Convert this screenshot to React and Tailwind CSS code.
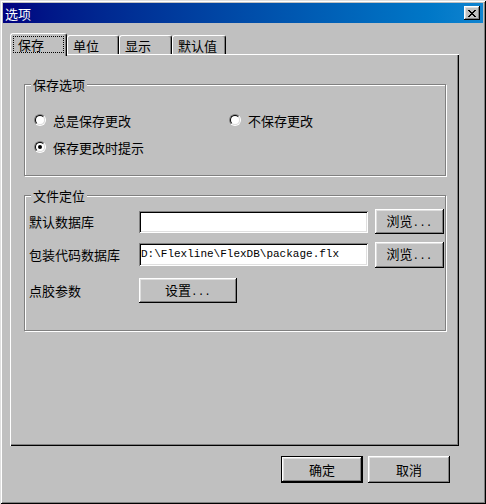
import React from "react";

const raised =
  "shadow-[inset_-1px_-1px_#000,inset_1px_1px_#fff,inset_-2px_-2px_#808080,inset_2px_2px_#dfdfdf]";
const sunken =
  "shadow-[inset_1px_1px_#808080,inset_-1px_-1px_#fff,inset_2px_2px_#000,inset_-2px_-2px_#dfdfdf]";

function Radio({ checked }) {
  return (
    <div className="w-[12px] h-[12px] rounded-full border border-t-[#808080] border-l-[#808080] border-b-white border-r-white flex items-center justify-center shrink-0">
      <div className="w-[10px] h-[10px] rounded-full border border-t-black border-l-black border-b-[#dfdfdf] border-r-[#dfdfdf] bg-white flex items-center justify-center">
        {checked && <div className="w-[4px] h-[4px] rounded-full bg-black" />}
      </div>
    </div>
  );
}

function RadioItem({ checked, label }) {
  return (
    <div className="flex items-center h-[16px] gap-[7px]">
      <Radio checked={checked} />
      <span>{label}</span>
    </div>
  );
}

function Dots() {
  return <span className="font-['Liberation_Mono',monospace] text-[11px]">...</span>;
}

function Group({ label, className, children }) {
  return (
    <div
      className={
        "relative border border-[#808080] shadow-[inset_1px_1px_#fff,1px_1px_#fff] " +
        className
      }
    >
      <span className="absolute left-[6px] top-[-8px] px-[2px] leading-[15px] bg-[#c0c0c0]">
        {label}
      </span>
      {children}
    </div>
  );
}

function Tab({ label, w }) {
  return (
    <div
      className={
        "h-[19px] border-l border-t border-r border-l-white border-t-white border-r-black rounded-t-[3px] shadow-[inset_-1px_0_#808080] flex items-center pl-[5px] " +
        w
      }
    >
      {label}
    </div>
  );
}

export default function App() {
  return (
    <div className="w-[486px] h-[504px] bg-[#c0c0c0] p-[3px] flex flex-col text-[13px] leading-[15px] text-black font-['Noto_Sans_CJK_SC','Noto_Sans',sans-serif] shadow-[inset_1px_1px_#dfdfdf,inset_-1px_-1px_#000,inset_2px_2px_#fff,inset_-2px_-2px_#808080]">
      {/* Title bar */}
      <div className="h-[20px] bg-linear-to-r from-[#000080] to-[#1084d0] flex items-center justify-between pl-[2px] pr-[3px]">
        <span className="text-white text-[13px]">选项</span>
        <div className={"w-[16px] h-[14px] bg-[#c0c0c0] flex items-center justify-center " + raised}>
          <svg width="8" height="7" viewBox="0 0 8 7" shapeRendering="crispEdges">
            <path
              d="M0 0h2v1H0zM6 0h2v1H6zM1 1h2v1H1zM5 1h2v1H5zM2 2h4v1H2zM3 3h2v1H3zM2 4h4v1H2zM1 5h2v1H1zM5 5h2v1H5zM0 6h2v1H0zM6 6h2v1H6z"
              fill="#000"
            />
          </svg>
        </div>
      </div>

      {/* Tabs */}
      <div className="mt-[10px] ml-[7px] flex items-end">
        <div className="relative z-10 w-[57px] h-[23px] -mb-[2px] bg-[#c0c0c0] border-l border-t border-r border-l-white border-t-white border-r-black rounded-t-[3px] shadow-[inset_-1px_0_#808080] pt-[2px] px-[2px]">
          <div className="h-[17px] border border-dotted border-black flex items-center pl-[4px]">
            保存
          </div>
        </div>
        <Tab label="单位" w="w-[52px]" />
        <Tab label="显示" w="w-[53px]" />
        <Tab label="默认值" w="w-[54px]" />
      </div>

      {/* Panel */}
      <div className="ml-[7px] w-[449px] h-[392px] shadow-[inset_1px_1px_#fff,inset_-1px_-1px_#000,inset_-2px_-2px_#808080] pt-[30px] pl-[14px]">
        <Group label="保存选项" className="w-[422px] h-[92px] pt-[27px] pl-[9px]">
          <div className="grid grid-cols-[195px_auto] gap-y-[11px]">
            <RadioItem label="总是保存更改" />
            <RadioItem label="不保存更改" />
            <RadioItem checked label="保存更改时提示" />
          </div>
        </Group>

        <Group label="文件定位" className="mt-[19px] w-[422px] h-[136px] pt-[13px] pl-[4px]">
          <div className="flex items-center h-[25px]">
            <span className="w-[110px]">默认数据库</span>
            <div className={"w-[229px] h-[22px] bg-white " + sunken} />
            <button className={"ml-[7px] w-[69px] h-[25px] flex items-center justify-center " + raised}>
              <span>
                浏览<Dots />
              </span>
            </button>
          </div>
          <div className="flex items-center h-[25px] mt-[8px]">
            <span className="w-[110px]">包装代码数据库</span>
            <div
              className={
                "w-[229px] h-[23px] bg-white flex items-center pl-[2px] font-['Liberation_Mono',monospace] text-[11px] " +
                sunken
              }
            >
              D:\Flexline\FlexDB\package.flx
            </div>
            <button className={"ml-[7px] w-[69px] h-[26px] flex items-center justify-center " + raised}>
              <span>
                浏览<Dots />
              </span>
            </button>
          </div>
          <div className="flex items-center h-[25px] mt-[11px]">
            <span className="w-[110px]">点胶参数</span>
            <button className={"w-[98px] h-[25px] flex items-center justify-center " + raised}>
              <span>
                设置<Dots />
              </span>
            </button>
          </div>
        </Group>
      </div>

      {/* Bottom buttons */}
      <div className="mt-[10px] flex justify-end pr-[33px] gap-[5px]">
        <div className="w-[82px] h-[27px] border border-black">
          <button className={"w-full h-full flex items-center justify-center " + raised}>确定</button>
        </div>
        <button className={"w-[82px] h-[27px] flex items-center justify-center " + raised}>取消</button>
      </div>
    </div>
  );
}
